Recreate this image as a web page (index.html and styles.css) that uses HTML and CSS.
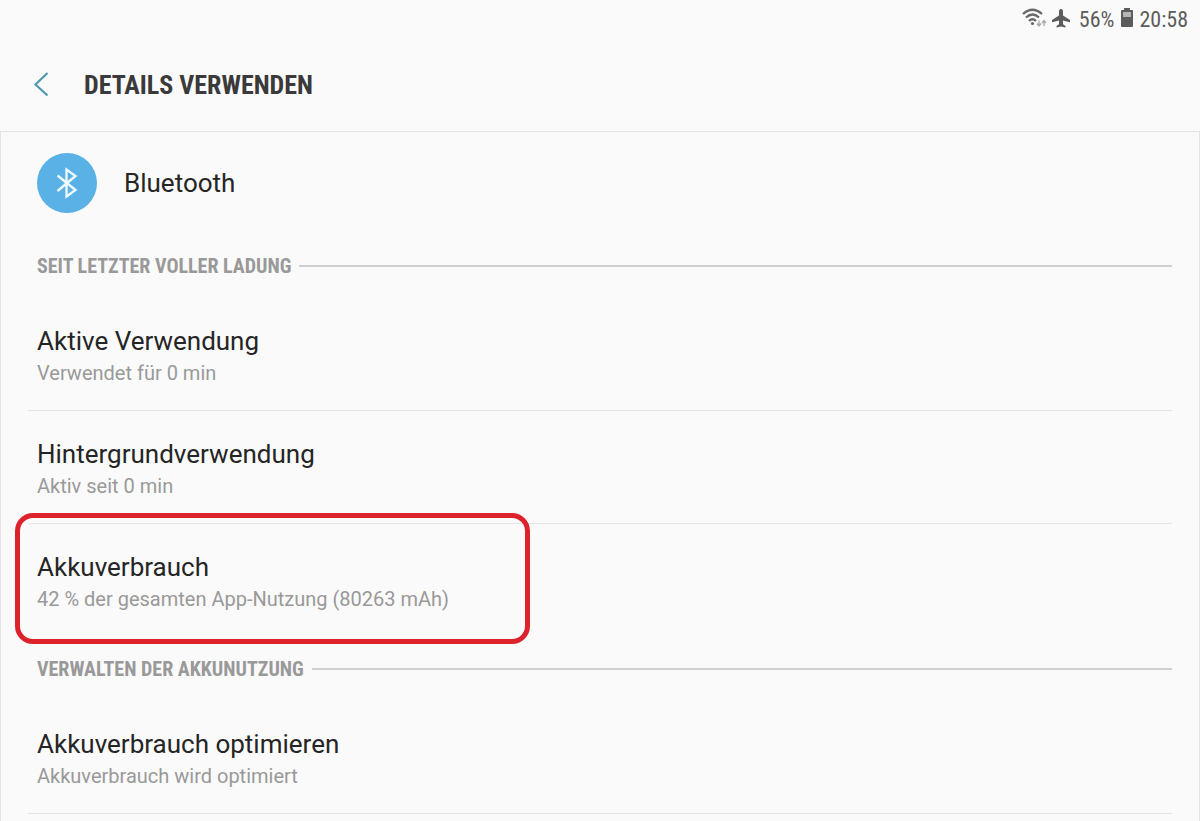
FILE: index.html
```html
<!DOCTYPE html>
<html lang="de">

<head>
    <meta charset="UTF-8">
    <meta name="viewport" content="width=device-width, initial-scale=1.0">
    <title>Details verwenden</title>
    <link rel="stylesheet" href="styles.css">
</head>

<body>
    <div class="status-bar">
        <svg class="wifi-icon" width="25" height="22" viewBox="0 0 25 22" aria-hidden="true">
            <g fill="none" stroke="#686868" stroke-width="2.300">
                <path d="M1 6Q10.500 -2.500 20 6"/>
                <path d="M4 9.500Q10.500 3.500 17 9.500"/>
                <path d="M7 13Q10.500 9.500 14 13"/>
            </g>
            <circle cx="10.500" cy="15.500" r="1.600" fill="#686868"/>
            <path d="M17 12.500V18M15 15.500l2 2.500 2-2.500M22 18V12.500M20 15l2-2.500 2 2.500" fill="none" stroke="#aaa" stroke-width="1.400"/>
        </svg>
        <svg class="plane-icon" width="20" height="22" viewBox="0 0 20 22" aria-hidden="true">
            <path d="M10 1C8.700 1 8 2 8 3.200V7.500L1 12v2.200l7-1.700v3.700L5.500 18v1.500l4.500-1 4.500 1V18L12 16.200v-3.700l7 1.700V12l-7-4.500V3.200C12 2 11.300 1 10 1z" fill="#5c5c5c"/>
        </svg>
        <span class="battery-text">56%</span>
        <svg class="battery-icon" width="12" height="22" viewBox="0 0 12 22" aria-hidden="true">
            <path d="M3 0h6v2h2q1 0 1 1v15q0 1-1 1H1q-1 0-1-1V3q0-1 1-1h2z" fill="#5c5c5c"/>
            <path d="M2 4h8v5H2z" fill="#b5b5b5"/>
        </svg>
        <span class="clock">20:58</span>
    </div>

    <header class="header">
        <button class="back-button" type="button" aria-label="Zurück">
            <svg width="16" height="26" viewBox="0 0 16 26" aria-hidden="true">
                <path d="M15.500 1L3.500 12.500l12 11" fill="none" stroke="#5097b0" stroke-width="2.200"/>
            </svg>
        </button>
        <h1>DETAILS VERWENDEN</h1>
    </header>

    <main class="panel">
        <div class="app">
            <div class="app-icon">
                <svg width="22" height="32" viewBox="0 0 22 32" aria-hidden="true">
                    <path d="M1.500 8.500L19.500 23l-9 6.500V2.500L19.500 9 1.500 24" fill="none" stroke="#f0fbff" stroke-width="2.300"/>
                </svg>
            </div>
            <span class="app-name">Bluetooth</span>
        </div>

        <section>
            <h2 class="section-title">SEIT LETZTER VOLLER LADUNG</h2>
            <div class="row">
                <div class="row-title">Aktive Verwendung</div>
                <div class="row-text">Verwendet für 0 min</div>
            </div>
            <div class="row">
                <div class="row-title">Hintergrundverwendung</div>
                <div class="row-text">Aktiv seit 0 min</div>
            </div>
            <div class="row marked">
                <div class="row-title">Akkuverbrauch</div>
                <div class="row-text">42 % der gesamten App-Nutzung (80263 mAh)</div>
            </div>
        </section>

        <section>
            <h2 class="section-title">VERWALTEN DER AKKUNUTZUNG</h2>
            <a class="row" href="#">
                <div class="row-title">Akkuverbrauch optimieren</div>
                <div class="row-text">Akkuverbrauch wird optimiert</div>
            </a>
        </section>
    </main>
</body>

</html>
```
FILE: styles.css
```css
* {
    box-sizing: border-box;
}

body {
    margin: 0;
    min-height: 100vh;
    display: flex;
    flex-direction: column;
    background-color: #fafafa;
    color: #252525;
    font-family: Roboto, "Liberation Sans", sans-serif;
}

/* status bar */
.status-bar {
    height: 38px;
    padding-right: 12px;
    display: flex;
    align-items: center;
    justify-content: flex-end;
    color: #5c5c5c;
    font-family: "Roboto Condensed", Roboto, sans-serif;
    font-size: 22px;
}

.plane-icon {
    margin: 0 8px 0 4px;
}

.battery-icon {
    margin: 0 6px 0 7px;
}

/* header */
.header {
    height: 93px;
    padding: 0 32px;
    display: flex;
    align-items: center;
    gap: 36px;
}

.back-button {
    padding: 0;
    border: none;
    background: none;
    display: flex;
    cursor: pointer;
}

.header h1 {
    margin: 0;
    color: #3a3a3a;
    font-family: "Roboto Condensed", Roboto, sans-serif;
    font-size: 26px;
    font-weight: bold;
}

/* content */
.panel {
    flex: 1;
    padding: 0 27px;
    border: 1px solid #e3e3e3;
    border-bottom: none;
}

.app {
    padding: 21px 9px;
    display: flex;
    align-items: center;
    gap: 27px;
}

.app-icon {
    width: 60px;
    height: 60px;
    border-radius: 50%;
    background-color: #59b1e6;
    display: flex;
    align-items: center;
    justify-content: center;
}

.app-name {
    font-size: 26px;
}

.section-title {
    height: 64px;
    margin: 0;
    padding-left: 9px;
    display: flex;
    align-items: center;
    gap: 8px;
    color: #999;
    font-family: "Roboto Condensed", Roboto, sans-serif;
    font-size: 20px;
    font-weight: bold;
}

.section-title::after {
    content: "";
    flex: 1;
    height: 2px;
    background-color: #d0d0d0;
}

.row {
    position: relative;
    display: block;
    padding: 27px 9px 21px;
    border-bottom: 1px solid #e3e3e3;
    color: inherit;
    text-decoration: none;
}

.row-title {
    font-size: 26px;
    line-height: 32px;
}

.row-text {
    color: #999;
    font-size: 20px;
    line-height: 32px;
}

/* red frame around the battery row */
.marked {
    border-bottom-color: transparent;
}

.marked::after {
    content: "";
    position: absolute;
    top: -11px;
    bottom: -8px;
    left: -13px;
    width: 505px;
    border: 5px solid #dc232b;
    border-radius: 18px;
}
```
